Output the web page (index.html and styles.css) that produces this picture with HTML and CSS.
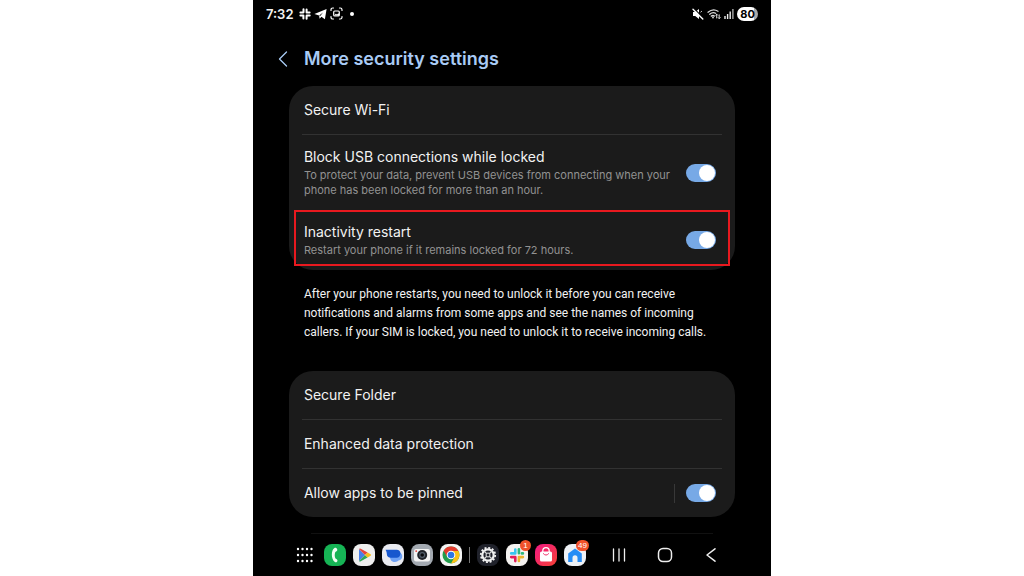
FILE: index.html
```html
<!DOCTYPE html>
<html lang="en">
<head>
  <meta charset="UTF-8">
  <title>More security settings</title>
  <meta name="viewport" content="width=device-width, initial-scale=1.0">
  <link rel="stylesheet" href="styles.css">
</head>
<body>

  <div class="phone">
    <header class="status-bar">
      <div class="status-left">
        <span class="clock">7:32</span>
        <svg width="12" height="12" viewBox="0 0 12 12" fill="none" stroke="#fff" stroke-width="2" stroke-linecap="round">
          <path d="M4.5 1.3v3M7.6 1.6v3M4.4 7.4v3M7.6 7.7v3M1.4 4.5h3M7.6 4.4h3M1.4 7.5h3M7.7 7.6h3"/>
        </svg>
        <svg width="13" height="12" viewBox="0 0 13 12" fill="#fff">
          <path d="M.4 5.9L12.6.9l-1.7 10.3-3.5-2.4-1.8 2-.5-3.2z"/>
          <path d="M5.2 7.4L9 4.6 6.2 8z" fill="#000"/>
        </svg>
        <svg width="13" height="13" viewBox="0 0 13 13" fill="none" stroke="#fff" stroke-width="1.2" stroke-linecap="round">
          <path d="M1 3.5V2.8Q1 1 2.8 1h.7M9.5 1h.7Q12 1 12 2.8v.7M12 9.5v.7Q12 12 10.2 12h-.7M3.5 12h-.7Q1 12 1 10.2v-.7"/>
          <rect x="3.7" y="4" width="5.6" height="5" rx="1"/>
          <path d="M4 8.5l1.8-1.7 1.2.8 1.4-1.3.8 1v1.5z" fill="#fff" stroke="none"/>
        </svg>
        <span class="dot"></span>
      </div>
      <div class="status-right">
        <svg width="12" height="12" viewBox="0 0 12 12">
          <path d="M1 4h2.2L7 1v10L3.2 8H1z" fill="#fff"/>
          <path d="M2.3.8l9 9.2" stroke="#000" stroke-width="1.2"/>
          <path d="M1 1.3l9.8 9.7" stroke="#fff" stroke-width="1.4" stroke-linecap="round"/>
          <path d="M8.6 4.2l1.2-1" stroke="#fff"/>
        </svg>
        <svg width="14" height="12" viewBox="0 0 14 12" fill="none" stroke="#ddd" stroke-width="1.3" stroke-linecap="round">
          <path d="M1 4.2Q6 0 11 3.2M2.7 6.2Q5.8 3.7 8.6 5.3M4.3 8.1Q6 6.9 7.3 8"/>
          <circle cx="6" cy="9.5" r=".9" fill="#ddd" stroke="none"/>
          <path d="M9.7 10V6.3M8.7 7.2l1-1 1 1M12.2 6.8v3.7M11.2 9.6l1 1 1-1" stroke-width="1"/>
        </svg>
        <svg width="10" height="11" viewBox="0 0 10 11" stroke-width="1.4">
          <path d="M1 8v3M3.6 6v5M6.2 3.5V11" stroke="#eee"/>
          <path d="M8.9 1v10" stroke="#aaa"/>
        </svg>
        <span class="battery">80</span>
      </div>
    </header>

    <div class="title-bar">
      <button type="button" aria-label="Navigate up">
        <svg width="10" height="16" viewBox="0 0 10 16" fill="none" stroke="#a9cbf5" stroke-width="1.3" stroke-linecap="round" stroke-linejoin="round">
          <path d="M8.5 1L1.5 8l7 7"/>
        </svg>
      </button>
      <h1>More security settings</h1>
    </div>

    <main class="content">
      <section class="card">
        <div class="row">
          <a class="name" href="#">Secure Wi-Fi</a>
        </div>
        <div class="row tall">
          <label class="text" for="usb">
            <span class="name">Block USB connections while locked</span>
            <span class="desc">To protect your data, prevent USB devices from connecting when your phone has been locked for more than an hour.</span>
          </label>
          <input class="switch" type="checkbox" id="usb" checked>
        </div>
        <div class="row tall highlight">
          <label class="text" for="restart">
            <span class="name">Inactivity restart</span>
            <span class="desc">Restart your phone if it remains locked for 72 hours.</span>
          </label>
          <input class="switch" type="checkbox" id="restart" checked>
        </div>
      </section>

      <p class="note">After your phone restarts, you need to unlock it before you can receive notifications and alarms from some apps and see the names of incoming callers. If your SIM is locked, you need to unlock it to receive incoming calls.</p>

      <section class="card">
        <div class="row">
          <a class="name" href="#">Secure Folder</a>
        </div>
        <div class="row">
          <a class="name" href="#">Enhanced data protection</a>
        </div>
        <div class="row">
          <label class="name" for="pin">Allow apps to be pinned</label>
          <span class="split"></span>
          <input class="switch" type="checkbox" id="pin" checked>
        </div>
      </section>
      <div class="next-card"></div>
    </main>

    <nav class="taskbar">
      <button type="button" aria-label="All apps">
        <svg viewBox="0 0 22 22" fill="#fff">
          <circle cx="3" cy="5" r="1.2"/><circle cx="7.5" cy="5" r="1.2"/><circle cx="12" cy="5" r="1.2"/><circle cx="16.5" cy="5" r="1.2"/>
          <circle cx="3" cy="11" r="1.2"/><circle cx="7.5" cy="11" r="1.2"/><circle cx="12" cy="11" r="1.2"/><circle cx="16.5" cy="11" r="1.2"/>
          <circle cx="3" cy="17" r="1.2"/><circle cx="7.5" cy="17" r="1.2"/><circle cx="12" cy="17" r="1.2"/><circle cx="16.5" cy="17" r="1.2"/>
        </svg>
      </button>
      <button type="button" aria-label="Phone">
        <svg viewBox="0 0 22 22">
          <rect width="22" height="22" rx="8" fill="#16b455"/>
          <path d="M10.5 4C7 6 6.8 15 10.9 18.1c.6.4 1.7.2 2.3-.7.5-.8.3-1.7-.5-2.2l-1.2-.7c-1-2-1-4.5-.2-6.6l1.2-.6c.8-.5 1-1.3.6-2.2-.5-1-1.7-1.6-2.6-1.1z" fill="#f2fff5"/>
        </svg>
      </button>
      <button type="button" aria-label="Play Store">
        <svg viewBox="0 0 22 22">
          <rect width="22" height="22" rx="8" fill="#eee"/>
          <path d="M6 5v12l6-6z" fill="#4a7fe8"/>
          <path d="M6 5q.6-1 1.8-.3L14.6 8.5 12 11z" fill="#e8453c"/>
          <path d="M6 17q.6 1 1.8.3l6.8-3.8L12 11z" fill="#2fa655"/>
          <path d="M14.6 8.5l3 1.7q1 .8 0 1.6l-3 1.7L12 11z" fill="#f8bd1b"/>
        </svg>
      </button>
      <button type="button" aria-label="Messages">
        <svg viewBox="0 0 22 22">
          <rect width="22" height="22" rx="8" fill="#e9eaf0"/>
          <path d="M8 8h7.5a3.5 3.5 0 0 1 1 8.5q-1 1.4-3.5 1.4c-3 0-5-2-5-5z" fill="#6fa2f5"/>
          <path d="M3.5 5.7h11.2c2.2 0 3.8 1.6 3.8 3.8s-1.6 4.3-3.8 4.3H9c-2.6 0-4.2-1.7-4.2-4.1 0-1.4-.5-2.6-1.3-4z" fill="#1757ce"/>
        </svg>
      </button>
      <button type="button" aria-label="Camera">
        <svg viewBox="0 0 22 22">
          <rect width="22" height="22" rx="8" fill="#a3a9b1"/>
          <rect x="3" y="5" width="16" height="12.5" rx="2" fill="#f3f3f3"/>
          <circle cx="11.2" cy="11" r="5" fill="#202329"/>
          <circle cx="11.2" cy="11" r="3" fill="#525d69"/>
          <circle cx="11.2" cy="11" r="1.8" fill="#08090c"/>
          <circle cx="5.2" cy="7.1" r=".9" fill="#e63b35"/>
        </svg>
      </button>
      <button type="button" aria-label="Chrome">
        <svg viewBox="0 0 22 22">
          <rect width="22" height="22" rx="8" fill="#f3f3f3"/>
          <circle cx="11" cy="11" r="8.5" fill="#229b4b"/>
          <path d="M18.400 6.900H11l3.600 6.200L11 19.500A8.500 8.500 0 0 0 18.400 6.900z" fill="#fbc116"/>
          <path d="M3.600 6.800A8.500 8.500 0 0 1 18.400 6.900H11L7.400 13.100z" fill="#e33b2e"/>
          <circle cx="11" cy="11" r="4.3" fill="#fff"/>
          <circle cx="11" cy="11" r="3.3" fill="#2c76e4"/>
        </svg>
      </button>
      <span class="separator"></span>
      <button type="button" aria-label="Settings">
        <svg viewBox="0 0 22 22">
          <rect width="22" height="22" rx="8" fill="#20222b"/>
          <circle cx="11" cy="11" r="7.2" fill="none" stroke="#f2f2f2" stroke-width="1.8" stroke-dasharray="2 1.77"/>
          <circle cx="11" cy="11" r="5.7" fill="none" stroke="#f2f2f2" stroke-width="2.2"/>
          <path d="M7 7l8 8M15 7l-8 8" stroke="#d4d4d4" stroke-width="1.3"/>
          <circle cx="11" cy="11" r="2" fill="#20222b" stroke="#e4e4e4"/>
        </svg>
      </button>
      <button type="button" aria-label="Slack, 1 notification">
        <svg viewBox="0 0 22 22" fill="none" stroke-width="2.6" stroke-linecap="round">
          <rect width="22" height="22" rx="8" fill="#f4f2f0"/>
          <path d="M9.3 5.5v3.8M5.2 9.4h4.1" stroke="#36c5f0"/>
          <path d="M12.9 5.3v4M16.900 9.400h-1" stroke="#2eb67d"/>
          <path d="M12.9 13.1h4M12.9 16.9v-3" stroke="#ecb22e"/>
          <path d="M9.3 13.1v4M5.2 13.1h3" stroke="#e01e5a"/>
        </svg>
        <span class="badge">1</span>
      </button>
      <button type="button" aria-label="Galaxy Store">
        <svg viewBox="0 0 22 22">
          <defs>
            <linearGradient id="store" x1="0" y1="0" x2="1" y2="1">
              <stop offset="0" stop-color="#f21984"/>
              <stop offset="1" stop-color="#f64135"/>
            </linearGradient>
          </defs>
          <rect width="22" height="22" rx="8" fill="url(#store)"/>
          <path d="M7.8 8V6.9a3.2 3.2 0 0 1 6.4 0V8" fill="none" stroke="#fff" stroke-width="1.3"/>
          <rect x="5" y="7.5" width="12" height="10" rx="1.6" fill="#fff"/>
          <path d="M8.4 9.7q2.6 3 5.2 0" fill="none" stroke="#ef2c67" stroke-linecap="round"/>
        </svg>
      </button>
      <button type="button" aria-label="Home app, 49 notifications">
        <svg viewBox="0 0 22 22">
          <rect width="22" height="22" rx="8" fill="#eef1f5"/>
          <path d="M4.2 9.6L11 4.4l6.8 5.2V18h-4.3v-4.2a2.5 2.5 0 0 0-5 0V18H4.2z" fill="#268df5"/>
        </svg>
        <span class="badge wide">49</span>
      </button>
      <div class="nav-keys">
        <button type="button" aria-label="Recents">
          <svg viewBox="0 0 22 22" fill="none" stroke="#eee" stroke-width="1.3" stroke-linecap="round">
            <path d="M5.5 5v12M11 5v12M16.5 5v12"/>
          </svg>
        </button>
        <button type="button" aria-label="Home">
          <svg viewBox="0 0 22 22" fill="none" stroke="#eee" stroke-width="1.5">
            <rect x="4.5" y="4.5" width="13" height="13" rx="4.5"/>
          </svg>
        </button>
        <button type="button" aria-label="Back">
          <svg viewBox="0 0 22 22" fill="none" stroke="#eee" stroke-width="1.5" stroke-linecap="round" stroke-linejoin="round">
            <path d="M15 4.8L7 11l8 6.2"/>
          </svg>
        </button>
      </div>
    </nav>
  </div>

</body>
</html>
```

FILE: styles.css
```css
* {
  box-sizing: border-box;
}

body {
  margin: 0;
  background: #fff;
  font-family: 'Inter', sans-serif;
  color: #f2f2f2;
}

.phone {
  display: flex;
  flex-direction: column;
  width: 50.6%;
  min-width: 480px;
  min-height: 100vh;
  margin: 0 auto;
  background: #000;
}

svg {
  display: block;
}

button {
  position: relative;
  padding: 0;
  border: none;
  background: none;
  cursor: pointer;
}

a {
  color: inherit;
  text-decoration: none;
}

.status-bar {
  display: flex;
  justify-content: space-between;
  align-items: center;
  height: 27px;
  padding: 0 13px;
}

.status-left,
.status-right {
  display: flex;
  align-items: center;
  gap: 3px;
}

.clock {
  margin-right: 2px;
  font-size: 13px;
  font-weight: 600;
}

.dot {
  width: 4px;
  height: 4px;
  margin-left: 4px;
  border-radius: 50%;
  background: #fff;
}

.battery {
  width: 21px;
  border-radius: 7px;
  background: linear-gradient(to right, #fff 80%, #aaa 80%);
  color: #000;
  font-size: 11px;
  font-weight: 700;
  line-height: 14px;
  text-align: center;
}

.title-bar {
  display: flex;
  align-items: center;
  gap: 16px;
  height: 59px;
  padding: 4px 25px 0;
}

h1 {
  margin: 0;
  color: #a9cbf5;
  font-size: 18px;
  font-weight: 600;
}

.content {
  flex: 1;
  padding: 0 36px;
}

.card {
  padding: 0 13px;
  border-radius: 24px;
  background: #1b1b1b;
}

.row {
  position: relative;
  display: flex;
  align-items: center;
  min-height: 48px;
  padding: 0 6px 0 2px;
}

.row + .row {
  min-height: 49px;
  border-top: 1px solid #323232;
}

.row.tall {
  padding-top: 12px;
  padding-bottom: 12px;
}

.row.highlight {
  border-top: none;
}

/* red frame around the setting */
.highlight::after {
  content: "";
  position: absolute;
  inset: 0 -8px 4px;
  border: 2px solid #e8191f;
  pointer-events: none;
}

.text {
  flex: 1;
  padding-right: 16px;
}

.name {
  display: block;
  flex: 1;
  font-size: 14px;
  line-height: 20px;
}

.desc {
  display: block;
  margin-top: 1px;
  color: #929292;
  font-size: 11px;
  line-height: 15px;
}

.switch {
  flex: none;
  width: 30px;
  height: 18px;
  margin: 0;
  padding: 1px;
  appearance: none;
  border-radius: 9px;
  background: #555;
  cursor: pointer;
}

.switch::before {
  content: "";
  display: block;
  width: 16px;
  height: 16px;
  border-radius: 50%;
  background: #fff;
}

.switch:checked {
  background: #77a9e6;
}

.switch:checked::before {
  margin-left: auto;
}

.split {
  width: 1px;
  height: 19px;
  margin-right: 11px;
  background: #383838;
}

.note {
  margin: 15px 0 29px;
  padding: 0 15px;
  font-family: 'Roboto', sans-serif;
  font-size: 12px;
  line-height: 19px;
}

.next-card {
  height: 1px;
  margin: 16px 22px 0;
  background: #111;
}

.taskbar {
  display: flex;
  align-items: center;
  gap: 7px;
  height: 42px;
  padding: 0 49px 0 42px;
}

.taskbar button {
  flex: none;
  width: 22px;
  height: 22px;
}

.separator {
  width: 1px;
  height: 16px;
  background: #777;
}

.badge {
  position: absolute;
  top: -4px;
  right: -3px;
  width: 11px;
  border-radius: 6px;
  background: #f0522a;
  color: #fff;
  font-size: 8px;
  line-height: 11px;
  text-align: center;
}

.badge.wide {
  width: 13px;
}

.nav-keys {
  display: flex;
  gap: 24px;
  margin-left: auto;
}
```
